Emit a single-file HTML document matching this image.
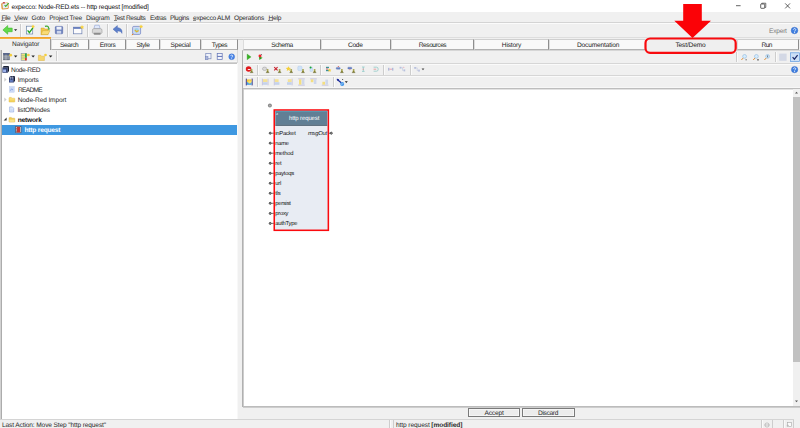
<!DOCTYPE html>
<html><head><meta charset="utf-8">
<style>
*{box-sizing:border-box;margin:0;padding:0}
html,body{width:800px;height:428px;overflow:hidden;background:#f0f0f0;text-rendering:geometricPrecision;font-family:"Liberation Sans",sans-serif;color:#1a1a1a}
.a{position:absolute}
.t{margin-top:.7px;position:absolute;white-space:nowrap;font-size:6.6px;line-height:10px;letter-spacing:-0.16px;color:#2c2c2c}
.tab{position:absolute;top:39px;height:11px;background:#f9f9f9;border:1px solid #cfcfcf;border-left-color:#dcdcdc;border-right-color:#8e8e8e;border-bottom-color:#b2b2b2;font-size:6.6px;letter-spacing:-0.16px;text-align:center;color:#222;white-space:nowrap}
.tab span{position:absolute;left:0;right:0;top:-1px;line-height:10px;transform:translateY(1.5px)}
.vs{position:absolute;width:1px;background:#cdcdcd;box-shadow:1px 0 0 #fafafa}
.hs{position:absolute;height:1px;background:#c9c9c9}
svg{position:absolute;overflow:visible}
.tr{transform:translateY(0px)}
.pl{font-size:5.800px;letter-spacing:-0.22px;color:#101010}
u{text-decoration:none;background:linear-gradient(rgba(0,0,0,.6),rgba(0,0,0,.6)) 0 5.100px/100% .700px no-repeat}
</style></head><body>
<!-- title bar -->
<div class="a" style="left:0;top:0;width:800px;height:12px;background:#fff"></div>
<svg style="left:0;top:0" width="11" height="11" viewBox="0 0 11 11"><rect x="1.300" y="2.700" width="7.300" height="6.500" rx="1.200" fill="#dc9a40" transform="rotate(-6 5 6)"/><rect x="2.700" y="3.300" width="5" height="4.900" fill="#e6edfa" transform="rotate(-6 5 6)"/><rect x="2.700" y="2" width="2.300" height="1.500" rx=".4" fill="#c85454"/><path d="M4.600 5.100l1.100 1.300 3-3.300" stroke="#43b032" stroke-width="1.100" fill="none"/></svg>
<div class="t" style="left:11.400px;top:2.200px;color:#111;letter-spacing:-0.14px">expecco: Node-RED.ets -- http request [modified]</div>
<svg style="left:735px;top:2px" width="58" height="8" viewBox="0 0 58 8"><path d="M1 3.7h4.6" stroke="#222" stroke-width=".7"/><rect x="25.7" y="2" width="4" height="4.3" fill="none" stroke="#222" stroke-width=".7" rx=".5"/><path d="M26.8 2V1.2h4v4.2h-1" fill="none" stroke="#222" stroke-width=".6"/><path d="M50.2 1.4l4.8 5M55 1.4l-4.8 5" stroke="#222" stroke-width=".7"/></svg>
<!-- menu -->
<div id="menu">
<div class="t" style="left:1.4px;top:13.4px;letter-spacing:-0.45px"><u>F</u>ile</div>
<div class="t" style="left:14.2px;top:13.4px;letter-spacing:-0.2px"><u>V</u>iew</div>
<div class="t" style="left:31.6px;top:13.4px;letter-spacing:-0.27px">Goto</div>
<div class="t" style="left:49.2px;top:13.4px;letter-spacing:-0.24px">Project Tree</div>
<div class="t" style="left:86px;top:13.4px;letter-spacing:-0.18px">Diagram</div>
<div class="t" style="left:113.8px;top:13.4px;letter-spacing:-0.36px"><u>T</u>est Results</div>
<div class="t" style="left:150px;top:13.4px;letter-spacing:-0.45px">Extras</div>
<div class="t" style="left:170px;top:13.4px;letter-spacing:-0.38px">Plugins</div>
<div class="t" style="left:193px;top:13.4px;letter-spacing:-0.24px"><u>e</u>xpecco ALM</div>
<div class="t" style="left:234px;top:13.4px;letter-spacing:-0.23px">Operations</div>
<div class="t" style="left:268.4px;top:13.4px;letter-spacing:-0.2px"><u>H</u>elp</div>
</div>
<div class="hs" style="left:0;top:22px;width:800px;background:#d4d4d4"></div>
<div class="hs" style="left:0;top:23px;width:800px;background:#fbfbfb"></div>
<!-- main toolbar -->
<div class="vs" style="left:20px;top:24px;height:13px"></div>
<div class="vs" style="left:67px;top:24px;height:13px"></div>
<div class="vs" style="left:87px;top:24px;height:13px"></div>
<div class="vs" style="left:107px;top:24px;height:13px"></div>
<div class="vs" style="left:126px;top:24px;height:13px"></div>
<!-- toolbar icons -->
<svg style="left:0;top:23px" width="150" height="15" viewBox="0 0 150 15">
 <path d="M2.900 6.900l4.800-4.300v2.500h4.500v3.600H7.700v2.500z" fill="#63d94c" stroke="#3cb82c" stroke-width=".6" stroke-linejoin="round"/>
 <path d="M14 6.3h3.2l-1.6 1.8z" fill="#222"/>
 <rect x="26.5" y="3.2" width="6.2" height="7.8" fill="#fafcff" stroke="#6d86a8" stroke-width=".7"/><path d="M27.6 7.4l1.8 2.2 3.6-5" stroke="#1fa51f" stroke-width="1.3" fill="none"/><path d="M33 1.6l.7 1.2 1.3.2-1 .9.3 1.3-1.3-.7-1.2.7.3-1.3-1-.9 1.3-.2z" fill="#f7d13a"/>
 <path d="M41 5h3l.8 1H48v5.6h-7z" fill="#f2c84a" stroke="#c99a1e" stroke-width=".4"/><path d="M41 11.6l1.6-4H50l-2 4z" fill="#f9dc78" stroke="#c99a1e" stroke-width=".4"/><path d="M45 3.4c2-.9 3.6 0 3.8 2.2" stroke="#3aa82c" stroke-width="1.2" fill="none"/><path d="M47.6 5.4h2.6l-1.3 1.9z" fill="#3aa82c"/>
 <rect x="55.300" y="3.400" width="7.400" height="7.400" rx=".8" fill="#6a7fbc" stroke="#4a5fa4" stroke-width=".5"/><rect x="56.500" y="3.800" width="5" height="2.800" fill="#eef1f9"/><rect x="56.800" y="7.800" width="4.400" height="2.800" fill="#cdd5ec"/>
 <rect x="73.5" y="4.2" width="8.4" height="6.6" fill="#fbfbfd" stroke="#6b7fb0" stroke-width=".7"/><rect x="73.5" y="4.2" width="8.4" height="1.6" fill="#5a73b8"/><path d="M82 2l.8 1.4 1.5.2-1.1 1 .3 1.5-1.5-.8-1.4.8.3-1.5-1.1-1 1.5-.2z" fill="#f7d13a"/>
 <path d="M94 5.6l.8-3.4h4.4l.9 3.4z" fill="#dfe8fa" stroke="#7f93c8" stroke-width=".5"/><path d="M92.4 7.2q0-1.6 1.6-1.6h6.4q1.6 0 1.6 1.6v2.4l-1.6 1.8h-6.4l-1.6-1.8z" fill="#d9d9d9" stroke="#8e8e8e" stroke-width=".5"/><path d="M93.4 9.8h7.6l-1 1.6h-5.6z" fill="#8c8c8c"/>
 <path d="M113 6.2l4.4-3.6v2.2c3.6 0 5 2.2 4.6 5.6-.9-1.9-2.2-2.5-4.6-2.4v2z" fill="#5d7fc9" stroke="#3f60b0" stroke-width=".4"/>
 <rect x="132.6" y="3.4" width="8" height="8" rx="1.2" fill="#cfdaf3" stroke="#6d7fc0" stroke-width=".7"/><circle cx="136.6" cy="7.4" r="2.4" fill="#9fd3ee"/><path d="M135 7l1.6 1.8 2-1.4" stroke="#e9b420" stroke-width="1.2" fill="none"/><path d="M141 1.6l.7 1.2 1.4.2-1 .9.3 1.4-1.4-.7-1.2.7.3-1.4-1-.9 1.3-.2z" fill="#f7d13a"/><path d="M131.8 12l1.6-1" stroke="#e9861f" stroke-width="1"/>
</svg>
<!-- Expert -->
<div class="t" style="left:769px;top:26.300px;color:#7c7c7c;letter-spacing:-0.22px">Expert</div>
<svg style="left:791.400px;top:26.600px" width="7" height="7" viewBox="0 0 7 7"><circle cx="3.5" cy="3.5" r="3.3" fill="#3f7fe0" stroke="#2a5fc0" stroke-width=".4"/><path d="M2.4 2.7c0-1.5 2.4-1.5 2.3 0 0 .9-1.1.9-1.1 1.9" stroke="#fff" stroke-width=".8" fill="none"/><circle cx="3.6" cy="5.5" r=".5" fill="#fff"/></svg>
<div class="hs" style="left:0;top:37px;width:800px;background:#dedede"></div><div class="hs" style="left:0;top:39px;width:800px;background:#cdcdcd"></div>
<!-- left tabs -->
<div class="a" style="left:0;top:37.4px;width:51px;height:13px;background:#f0f0f0;border-right:1px solid #9a9a9a"></div>
<div class="a" style="left:0;top:37px;width:50.600px;height:2px;background:linear-gradient(#e9a040 0%,#f5a623 45%,#f7bd5c 100%)"></div>
<div class="t" style="left:12px;top:39.300px;letter-spacing:-0.1px">Navigator</div>
<div class="tab" style="left:51px;width:38px"><span style="letter-spacing:-0.43px;left:-1.600px">Search</span></div>
<div class="tab" style="left:89px;width:37px"><span style="letter-spacing:-0.38px">Errors</span></div>
<div class="tab" style="left:126px;width:34px"><span style="letter-spacing:-0.3px">Style</span></div>
<div class="tab" style="left:160px;width:41px"><span style="letter-spacing:-0.26px">Special</span></div>
<div class="tab" style="left:201px;width:37px"><span style="letter-spacing:-0.46px">Types</span></div>
<!-- right tabs -->
<div class="tab" style="left:243px;width:78px"><span style="letter-spacing:-0.43px">Schema</span></div>
<div class="tab" style="left:321px;width:70px"><span style="letter-spacing:-0.28px;left:-1.400px">Code</span></div>
<div class="tab" style="left:391px;width:83px"><span style="letter-spacing:-0.46px">Resources</span></div>
<div class="tab" style="left:474px;width:75px"><span>History</span></div>
<div class="tab" style="left:549px;width:97px"><span style="left:1.200px">Documentation</span></div>
<div class="tab" style="left:645px;width:91px;height:13px;background:#efefef;border-color:#efefef;z-index:2"><span>Test/Demo</span></div>
<div class="tab" style="left:737px;width:62.4px"><span style="letter-spacing:-0.49px;left:-3px">Run</span></div>
<!-- left sub toolbar -->
<div class="vs" style="left:55.5px;top:51px;height:11px"></div>
<svg style="left:0;top:50px" width="240" height="13" viewBox="0 0 240 13">
 <rect x="3.400" y="3.300" width="6.200" height="6.600" fill="#6e7686" stroke="#4f5868" stroke-width=".4"/><rect x="3.400" y="3.300" width="6.200" height="1.300" fill="#4a5a8a"/><path d="M3.400 6.200h6.200M3.400 8h6.200M6 4.600v5.300" stroke="#d5dae3" stroke-width=".5"/><circle cx="10.700" cy="5.200" r="1.350" fill="#f5cf3c"/>
 <path d="M13.900 5.400h3.500l-1.750 2.100z" fill="#222"/>
 <rect x="21.100" y="3.400" width="5.600" height="7" fill="#ece875" stroke="#7a86b0" stroke-width=".5"/><path d="M21.100 5.700h4M21.100 8h4" stroke="#8a96a8" stroke-width=".5"/><rect x="25" y="3.400" width="1.700" height="4.400" fill="#2fa547"/><rect x="25" y="7.800" width="1.700" height="2.600" fill="#de3030"/><circle cx="28.400" cy="5" r="1.350" fill="#f5cf3c"/>
 <path d="M31.400 5.400h3.500l-1.750 2.100z" fill="#222"/>
 <path d="M38.400 5.300h2.400l.7.900h2.900v4.300h-6z" fill="#f5d66c" stroke="#dcb341" stroke-width=".5"/><circle cx="45.500" cy="5" r="1.350" fill="#f5cf3c"/>
 <path d="M48.900 5.400h3.500l-1.750 2.100z" fill="#222"/>
 <rect x="205.800" y="3.400" width="5.200" height="5.400" fill="#eef2fb" stroke="#6476b0" stroke-width=".6"/><rect x="205.400" y="6.400" width="2.600" height="3.400" fill="#aab6da" stroke="#6476b0" stroke-width=".4"/>
 <rect x="217.200" y="3.600" width="5" height="6" fill="#f3f5fc" stroke="#5d6fb4" stroke-width=".7"/><path d="M217.200 6.400h5" stroke="#5d6fb4" stroke-width="1"/>
 <circle cx="231.700" cy="6.700" r="2.900" fill="#4a86e8" stroke="#2a5fc0" stroke-width=".4"/><path d="M230.700 6c0-1.300 2.100-1.300 2 0 0 .8-1 .8-1 1.600" stroke="#fff" stroke-width=".7" fill="none"/><circle cx="231.700" cy="8.500" r=".45" fill="#fff"/>
</svg>
<!-- left pane -->
<div class="a" style="left:0;top:50px;width:1px;height:369px;background:#d2d2d2"></div><div class="a" style="left:1px;top:50px;width:1px;height:369px;background:#acacac"></div><div class="a" style="left:2px;top:61px;width:235.600px;height:1px;background:#f6f6f6"></div><div class="a" style="left:2px;top:62px;width:235.600px;height:1px;background:#d3d3d3"></div><div class="a" style="left:2px;top:63px;width:235.600px;height:355.600px;background:#fff;border-top:1px solid #c3c3c3"></div><div class="a" style="left:237px;top:50px;width:1px;height:13px;background:#dadada"></div><div class="a" style="left:237px;top:63px;width:1px;height:356px;background:#f8f8f8"></div>
<div class="a" style="left:2px;top:125px;width:235px;height:9.5px;background:#3e98e1"></div>
<svg style="left:0;top:63.200px" width="30" height="75" viewBox="0 0 30 75">
 <path d="M3.600 3.100h5.400l-1.200 1.700H2.400z" fill="#1c2338"/><rect x="2.400" y="4.800" width="5.400" height="5" fill="#37477a"/><path d="M7.800 4.800l1.200-1.700v5l-1.200 1.700z" fill="#141a2c"/><rect x="3.100" y="6.500" width="2.900" height="2.600" fill="#9db2ea"/>
 <path d="M4.300 14.400v4.400l2.300-2.200z" fill="#cdcdcd"/>
 <path d="M10.200 13.100h4.800l-1.200 1.700H9z" fill="#232b47"/><rect x="9" y="14.800" width="4.800" height="4.700" fill="#2f3e72"/><path d="M13.800 14.800l1.200-1.700v4.700l-1.200 1.700z" fill="#161c30"/><path d="M10.600 13.400v3.200M12.300 13.400v3.200" stroke="#cfd8f0" stroke-width=".6"/><rect x="9.700" y="17.100" width="3.200" height="1.700" fill="#6c84c8"/>
 <rect x="9.400" y="23.600" width="4.800" height="5.600" fill="#cbd9f6" stroke="#b2c5ee" stroke-width=".4"/><path d="M10.300 27.700l1.300-1.800 1.400 1.100" stroke="#7d9be0" stroke-width=".8" fill="none"/>
 <path d="M4.300 34.400v4.400l2.300-2.200z" fill="#cdcdcd"/>
 <path d="M9 35.100q0-.7.700-.7h1.600l.7.800h2.300q.5 0 .5.500v3q0 .4-.4.400h-5q-.4 0-.4-.4z" fill="#f5d460" stroke="#dcb23c" stroke-width=".4"/><path d="M9.300 36h5.200" stroke="#fbe9a0" stroke-width=".7"/>
 <path d="M9.600 43.900h2.800l1.300 1.300v3.800H9.600z" fill="#dfe9fb" stroke="#7f9ad8" stroke-width=".5"/><path d="M10.500 46.300h2.200M10.500 47.500h2.200" stroke="#a9c0ea" stroke-width=".4"/>
 <path d="M6.6 54.6v3h-3z" fill="#333"/>
 <path d="M9 55.100q0-.7.700-.7h1.600l.7.800h2.300q.5 0 .5.500v3q0 .4-.4.400h-5q-.4 0-.4-.4z" fill="#f0cc55" stroke="#d4a934" stroke-width=".4"/><path d="M9.300 56.600h5.200v2.300h-5.200z" fill="#f9e38c"/>
 <rect x="15.8" y="63.6" width="5.2" height="6.2" fill="#d9dde6" stroke="#5c3030" stroke-width=".5"/><rect x="16.8" y="64" width="3.2" height="5.4" fill="#c43a36"/><path d="M15.8 65.5h1.2M15.8 67h1.2M15.8 68.5h1.2" stroke="#333" stroke-width=".4"/>
</svg>
<div class="t tr" style="left:11px;top:65.200px;letter-spacing:-0.34px">Node-RED</div>
<div class="t tr" style="left:17.700px;top:75.200px;letter-spacing:-0.15px">Imports</div>
<div class="t tr" style="left:17.9px;top:84.9px;letter-spacing:-0.68px">README</div>
<div class="t tr" style="left:17.7px;top:95px;letter-spacing:-0.13px">Node-Red Import</div>
<div class="t tr" style="left:17.7px;top:105px;letter-spacing:-0.17px">listOfNodes</div>
<div class="t tr" style="left:17.7px;top:115.1px;font-weight:bold;color:#111;letter-spacing:-0.19px">network</div>
<div class="t tr" style="left:24.5px;top:124.9px;font-weight:bold;color:#fff;letter-spacing:-0.19px">http request</div>
<!-- right pane frame -->
<div class="a" style="left:242px;top:50px;width:558px;height:356.800px;border-left:1px solid #b0b0b0;border-top:1px solid #d6d6d6"></div>
<div class="hs" style="left:244px;top:63px;width:556px;background:#d6d6d6"></div>
<div class="hs" style="left:244px;top:64px;width:556px;background:#fafafa"></div>
<div class="hs" style="left:244px;top:75px;width:556px;background:#d6d6d6"></div>
<div class="hs" style="left:244px;top:76px;width:556px;background:#fafafa"></div><div class="hs" style="left:244px;top:87px;width:556px;background:#f7f7f7"></div>
<div id="rtb">
<div class="vs" style="left:257px;top:64.6px;height:10.4px"></div>
<div class="vs" style="left:320.4px;top:64.6px;height:10.4px"></div>
<div class="vs" style="left:383px;top:64.6px;height:10.4px"></div>
<div class="vs" style="left:410px;top:64.6px;height:10.4px"></div>
<div class="vs" style="left:257px;top:77px;height:10.4px"></div>
<div class="vs" style="left:333.2px;top:77px;height:10.4px"></div>
<div class="vs" style="left:735.600px;top:52px;height:10.400px"></div>
<div class="vs" style="left:775.4px;top:52px;height:10.4px"></div>
<svg style="left:243px;top:50px" width="557" height="40" viewBox="243 50 557 40">
<defs>
 <g id="fig"><circle cx="0" cy="-0.9" r="1" fill="#a3a04a"/><path d="M-1.3 1.7q0-1.800 1.3-1.800t1.300 1.800z" fill="#86832e"/><path d="M-1.700 1.800h3.400" stroke="#55531c" stroke-width=".5"/></g>
 <g id="bars"><rect x="-3.3" y="-3.3" width="1" height="6.6" fill="#b9b4d6"/><rect x="2.3" y="-3.3" width="1" height="6.6" fill="#b9b4d6"/></g>
</defs>
<!-- row1 -->
<path d="M247.100 54l4 2.900-4 2.900z" fill="#35b022" stroke="#2b9a1c" stroke-width=".3"/>
<path d="M259 56.400l3.600 1.400-3.200 2.300z" fill="#2a9a1e"/><ellipse cx="260" cy="55.900" rx="1.500" ry="1.350" fill="#f0222a"/><path d="M260.600 54.500l1.200-.3.300 1z" fill="#222"/>
<!-- row2 -->
<circle cx="248.6" cy="69" r="2.8" fill="#e0181c"/><rect x="247.800" y="69" width="2.600" height=".9" fill="#fff"/><use href="#fig" x="251.6" y="70.8"/>
<ellipse cx="264.6" cy="68.8" rx="2.2" ry="1.7" fill="#d9d9d9" stroke="#9a9a9a" stroke-width=".5"/><use href="#fig" x="267.6" y="70.8"/>
<path d="M274.2 67.2l3.4 3.2M277.6 67.2l-3.4 3.2" stroke="#c8202a" stroke-width="1.1"/><use href="#fig" x="279.6" y="70.8"/>
<path d="M288.4 66.2l.8 1.6 1.8.2-1.3 1.2.3 1.8-1.6-.9-1.6.9.3-1.8-1.3-1.2 1.8-.2z" fill="#f4cf3a"/><use href="#fig" x="291.2" y="70.8"/>
<path d="M297.8 67.2q0-1 1-1h2q1.2 0 1.2 1.2v2.200q0 1-1 1h-2.200q-1 0-1-1z" fill="#cfe3f7" stroke="#a7c6ea" stroke-width=".4"/><use href="#fig" x="303" y="70.8"/>
<rect x="310" y="67.600" width="2.600" height="3.600" fill="#cfe3f7" stroke="#a7c6ea" stroke-width=".4"/><circle cx="310.600" cy="67.4" r="1" fill="#18a53a"/><use href="#fig" x="314.6" y="70.8"/>
<rect x="326" y="66.8" width="3" height="1.400" fill="#3f8f96"/><rect x="326" y="69.800" width="3" height="1.400" fill="#3f8f96"/><path d="M327 68.2v1.600" stroke="#d8262a" stroke-width=".8"/><path d="M329.6 68.6l.6 1 1.200.2-.9.800.2 1.200-1.100-.6-1.100.6.200-1.200-.9-.8 1.200-.2z" fill="#f4cf3a"/>
<rect x="336.200" y="67.4" width="4" height="1.800" rx=".6" fill="#6c86c8" stroke="#48609f" stroke-width=".3"/><path d="M337.600 67l.7-.9.700.9z" fill="#d8262a"/><use href="#fig" x="341.9" y="70.8"/>
<rect x="347.800" y="67.2" width="4" height="1.800" rx=".6" fill="#6c86c8" stroke="#48609f" stroke-width=".3"/><path d="M349.200 69.400l.7.900.7-.9z" fill="#d8262a"/><use href="#fig" x="353.6" y="70.8"/>
<g opacity=".65"><path d="M362 67h2.600M362 71.400h2.600M363.300 67v4.400" stroke="#5fb8b4" stroke-width=".8"/><path d="M362.600 69.200h1.400" stroke="#e05a5a" stroke-width=".8"/></g>
<g opacity=".65"><path d="M373.600 67.200h3q1.600 0 1.600 2t-1.600 2h-3" fill="none" stroke="#5fb8b4" stroke-width=".8"/><path d="M373.600 69.200h2.600" stroke="#e05a5a" stroke-width=".8"/></g>
<g opacity=".65"><rect x="388" y="67.800" width="1.400" height="2.800" fill="#8f9fd0"/><rect x="392" y="67.800" width="1.400" height="2.800" fill="#8f9fd0"/><path d="M389.400 69.200h2.600" stroke="#e05a7a" stroke-width=".8"/></g>
<g opacity=".65"><rect x="399.600" y="66.800" width="1.800" height="1.800" fill="#9aa7d4"/><rect x="403.600" y="69.400" width="1.600" height="2" fill="#9aa7d4"/><path d="M401.400 67.700h1.200v2.700h1" fill="none" stroke="#8f9fd0" stroke-width=".5"/><circle cx="403.800" cy="67.200" r=".5" fill="#e05a7a"/></g>
<g opacity=".65"><rect x="414.200" y="67" width="1.800" height="1.800" fill="#9aa7d4"/><rect x="418.200" y="69.600" width="1.600" height="2" fill="#9aa7d4"/><path d="M416 67.900h1.200v2.700h1" fill="none" stroke="#8f9fd0" stroke-width=".5"/></g>
<path d="M421.600 68.600h2.800l-1.400 1.600z" fill="#444"/>
<!-- row3 -->
<rect x="245.800" y="78.600" width="1.100" height="6.800" fill="#4a4088"/><rect x="251.600" y="78.600" width="1.100" height="6.800" fill="#4a4088"/><rect x="246.900" y="79.400" width="4.700" height="2.800" fill="#f4c83a"/><rect x="246.900" y="82.200" width="4.700" height="2.600" fill="#4a9fe0"/><circle cx="249.600" cy="82" r="1.500" fill="#fbe26a"/>
<g opacity=".75">
<use href="#bars" x="265.200" y="82"/><rect x="263" y="79.200" width="4.400" height="2.800" fill="#f6dc7a"/><rect x="263" y="82.200" width="4.400" height="2.600" fill="#b7c9ea"/>
<rect x="273.800" y="78.700" width="1" height="6.600" fill="#b9b4d6"/><rect x="274.800" y="79.200" width="3.800" height="2.800" fill="#f6dc7a"/><rect x="274.800" y="82.200" width="4.600" height="2.600" fill="#b7c9ea"/>
<rect x="291.600" y="78.700" width="1" height="6.600" fill="#b9b4d6"/><rect x="287.800" y="79.200" width="3.800" height="2.800" fill="#f6dc7a"/><rect x="287" y="82.200" width="4.600" height="2.600" fill="#b7c9ea"/>
<rect x="298.200" y="78.400" width="6.600" height="1" fill="#b9b4d6"/><rect x="298.200" y="84.600" width="6.600" height="1" fill="#b9b4d6"/><rect x="299" y="79.400" width="2.400" height="5.200" fill="#f6d85a"/><rect x="301.800" y="79.400" width="2.600" height="5.200" fill="#c3cfea"/>
<rect x="310.200" y="78.400" width="6.600" height="1" fill="#b9b4d6"/><rect x="310.800" y="79.400" width="2.600" height="2.800" fill="#f6d85a"/><rect x="313.800" y="79.400" width="2.600" height="4.600" fill="#c3cfea"/>
<rect x="321.800" y="84.600" width="6.600" height="1" fill="#b9b4d6"/><rect x="322.400" y="81.800" width="2.600" height="2.800" fill="#f6d85a"/><rect x="325.400" y="79.600" width="2.600" height="5" fill="#c3cfea"/>
</g>
<path d="M337 79.200l4.200 3.600" stroke="#1b2a9a" stroke-width="1.300"/><path d="M336.800 78.800l2.400.4-1.600 1.800z" fill="#1b2a9a"/><circle cx="342.200" cy="84" r="2" fill="#3f93e8"/><path d="M341 84.300l2.400-.8" stroke="#cfe6ff" stroke-width=".6"/><rect x="342.200" y="79" width=".9" height=".9" fill="#333"/>
<path d="M344.800 81.200h3l-1.500 1.700z" fill="#222"/>
<!-- right magnifiers -->
<g id="mag"><circle cx="744.600" cy="56.400" r="1.900" fill="#d6ecfb" stroke="#8fb7df" stroke-width=".6"/><path d="M743.200 58l-1.800 2" stroke="#e0913a" stroke-width="1"/></g>
<path d="M745.400 59.800h1.600" stroke="#333" stroke-width=".6"/>
<use href="#mag" x="11.800" y="0"/><path d="M757.200 59.800h1.600M758 59v1.600" stroke="#333" stroke-width=".6"/>
<use href="#mag" x="23" y="0"/><path d="M767.600 55.400v2" stroke="#345" stroke-width=".7"/>
<rect x="779.200" y="53.600" width="7.400" height="7.200" fill="#d3d8e5"/>
<rect x="790.600" y="52.800" width="8.800" height="8.800" fill="#cde0f7" stroke="#5f9be0" stroke-width=".7"/><path d="M792.600 57.200l1.800 2 3.200-4" stroke="#1c2a6a" stroke-width="1.200" fill="none"/>
<circle cx="794.600" cy="69.600" r="3.200" fill="#3f7fe0" stroke="#2a5fc0" stroke-width=".4"/><path d="M793.500 68.800c0-1.400 2.300-1.400 2.200 0 0 .9-1.100.9-1.100 1.700" stroke="#fff" stroke-width=".8" fill="none"/><circle cx="794.600" cy="71.500" r=".5" fill="#fff"/>
</svg>
</div>
<!-- canvas -->
<div class="a" style="left:243px;top:88px;width:557px;height:319px;background:linear-gradient(#e2e2e2,#e2e2e2) 0 0/100% 1px no-repeat #fff;border-top:1px solid #bdbdbd;border-bottom:1px solid #bcbcbc;box-shadow:0 1px 0 #cdcdcd"></div>
<div class="a" style="left:243px;top:89px;width:1px;height:317px;background:#cdcdcd"></div><div class="a" style="left:793.2px;top:89.2px;width:6.8px;height:316.6px;background:#f0f0f0"></div>
<div class="a" style="left:793.2px;top:97.4px;width:6.8px;height:264.4px;background:#c1c1c1"></div>
<svg style="left:793.2px;top:89.2px" width="7" height="317" viewBox="0 0 7 317"><path d="M2 4.6h3L3.5 2.8z" fill="#555"/><path d="M2 311.4h3l-1.5 1.8z" fill="#555"/></svg>
<!-- node -->
<svg style="left:266px;top:102px" width="8" height="8" viewBox="0 0 8 8"><circle cx="3.9" cy="3.6" r="2" fill="#8a8a8a"/><circle cx="3.9" cy="3.6" r=".9" fill="#b0b0b0"/></svg>
<svg style="left:270px;top:105px" width="64" height="130" viewBox="270 105 64 130"><rect x="274.250" y="110" width="54.100" height="120.300" fill="#e8ecf3" stroke="#fb0a0e" stroke-width="1.550"/><rect x="275.300" y="110.900" width="52" height="14" fill="#617f95"/><rect x="275.300" y="124.800" width="52" height="1" fill="#3f5465"/><rect x="275.300" y="110.900" width="52" height=".9" fill="#56a0b8"/></svg>

<div class="t" style="left:276px;top:110px;color:#dfe7ee;font-size:3.6px;font-style:italic;line-height:6px">a</div>
<div class="t" style="left:289px;top:113.600px;color:#fff;font-size:6px;letter-spacing:-0.12px">http request</div>
<div id="pins"><div class="t pl" style="left:275.2px;top:128.6px">inPacket</div><div class="t pl" style="left:275.2px;top:138.6px">name</div><div class="t pl" style="left:275.2px;top:148.6px">method</div><div class="t pl" style="left:275.2px;top:158.7px">ret</div><div class="t pl" style="left:275.2px;top:168.7px">paytoqs</div><div class="t pl" style="left:275.2px;top:178.7px">url</div><div class="t pl" style="left:275.2px;top:188.7px">tls</div><div class="t pl" style="left:275.2px;top:198.7px">persist</div><div class="t pl" style="left:275.2px;top:208.8px">proxy</div><div class="t pl" style="left:275.2px;top:218.8px">authType</div><div class="t pl" style="left:308px;top:128.600px;font-style:italic">msgOut</div><svg style="left:264px;top:126px" width="76" height="104" viewBox="0 0 76 104"><circle cx="6.2" cy="7.2" r="1" fill="#a8a8a8" stroke="#2c2c2c" stroke-width=".8"/><path d="M7.3 7.2h2.4" stroke="#3a3a3a" stroke-width=".7"/><circle cx="6.2" cy="17.2" r="1" fill="#a8a8a8" stroke="#2c2c2c" stroke-width=".8"/><path d="M7.3 17.2h2.4" stroke="#3a3a3a" stroke-width=".7"/><circle cx="6.2" cy="27.2" r="1" fill="#a8a8a8" stroke="#2c2c2c" stroke-width=".8"/><path d="M7.3 27.2h2.4" stroke="#3a3a3a" stroke-width=".7"/><circle cx="6.2" cy="37.3" r="1" fill="#a8a8a8" stroke="#2c2c2c" stroke-width=".8"/><path d="M7.3 37.3h2.4" stroke="#3a3a3a" stroke-width=".7"/><circle cx="6.2" cy="47.3" r="1" fill="#a8a8a8" stroke="#2c2c2c" stroke-width=".8"/><path d="M7.3 47.3h2.4" stroke="#3a3a3a" stroke-width=".7"/><circle cx="6.2" cy="57.3" r="1" fill="#a8a8a8" stroke="#2c2c2c" stroke-width=".8"/><path d="M7.3 57.3h2.4" stroke="#3a3a3a" stroke-width=".7"/><circle cx="6.2" cy="67.3" r="1" fill="#a8a8a8" stroke="#2c2c2c" stroke-width=".8"/><path d="M7.3 67.3h2.4" stroke="#3a3a3a" stroke-width=".7"/><circle cx="6.2" cy="77.3" r="1" fill="#a8a8a8" stroke="#2c2c2c" stroke-width=".8"/><path d="M7.3 77.3h2.4" stroke="#3a3a3a" stroke-width=".7"/><circle cx="6.2" cy="87.4" r="1" fill="#a8a8a8" stroke="#2c2c2c" stroke-width=".8"/><path d="M7.3 87.4h2.4" stroke="#3a3a3a" stroke-width=".7"/><circle cx="6.2" cy="97.4" r="1" fill="#a8a8a8" stroke="#2c2c2c" stroke-width=".8"/><path d="M7.3 97.4h2.4" stroke="#3a3a3a" stroke-width=".7"/><path d="M65 7.2h1.2" stroke="#3a3a3a" stroke-width=".7"/><circle cx="67.3" cy="7.2" r="1" fill="#a8a8a8" stroke="#2c2c2c" stroke-width=".8"/></svg></div>
<!-- buttons -->
<div class="a" style="left:468px;top:407.6px;width:52.2px;height:9.8px;background:#ececec;border:1px solid #7a7a7a;box-shadow:inset 0 0 0 .6px #fdfdfd"></div>
<div class="a" style="left:522px;top:407.6px;width:52.6px;height:9.8px;background:#ececec;border:1px solid #7a7a7a;box-shadow:inset 0 0 0 .6px #fdfdfd"></div>
<div class="t" style="left:484.4px;top:408.2px">Accept</div>
<div class="t" style="left:538px;top:408.2px;letter-spacing:-0.33px">Discard</div>
<!-- status -->
<div class="hs" style="left:0;top:419px;width:794px;background:#d4d4d4"></div>
<div class="t" style="left:2px;top:420.700px;letter-spacing:-0.13px">Last Action: Move Step "http request"</div>
<div class="vs" style="left:389px;top:420px;height:8px"></div>
<div class="vs" style="left:393px;top:420px;height:8px;box-shadow:none"></div>
<div class="t" style="left:396px;top:420.700px;letter-spacing:-0.1px">http request <b>[modified]</b></div>
<div class="vs" style="left:761px;top:420px;height:8px"></div>
<div class="vs" style="left:772px;top:420px;height:8px;box-shadow:none"></div>
<div class="vs" style="left:783px;top:420px;height:8px"></div>
<div class="vs" style="left:793px;top:420px;height:8px;box-shadow:none"></div>
<svg style="left:762px;top:420px" width="34" height="8" viewBox="762 420 34 8"><circle cx="767" cy="425" r="2.100" fill="#f6f6f6" stroke="#a2a2a2" stroke-width=".6"/><path d="M764.600 425h4.800" stroke="#a2a2a2" stroke-width=".6"/><rect x="787.600" y="422.600" width="3.800" height="4" fill="#fbfbfb" stroke="#a8a8a8" stroke-width=".6"/><rect x="787" y="425" width="1.800" height="1.800" fill="#dcdcdc" stroke="#b0b0b0" stroke-width=".4"/></svg>
<!-- annotation -->
<svg style="left:0;top:0;z-index:3" width="800" height="60" viewBox="0 0 800 60"><path d="M683.2 4.1H701.8V20.8h9.2L692.5 37.9 674.3 20.8h8.9z" fill="#fb0207"/><rect x="645.5" y="38.5" width="90.2" height="14.4" rx="4.6" fill="none" stroke="#f80a0e" stroke-width="2.2"/></svg>
</body></html>
